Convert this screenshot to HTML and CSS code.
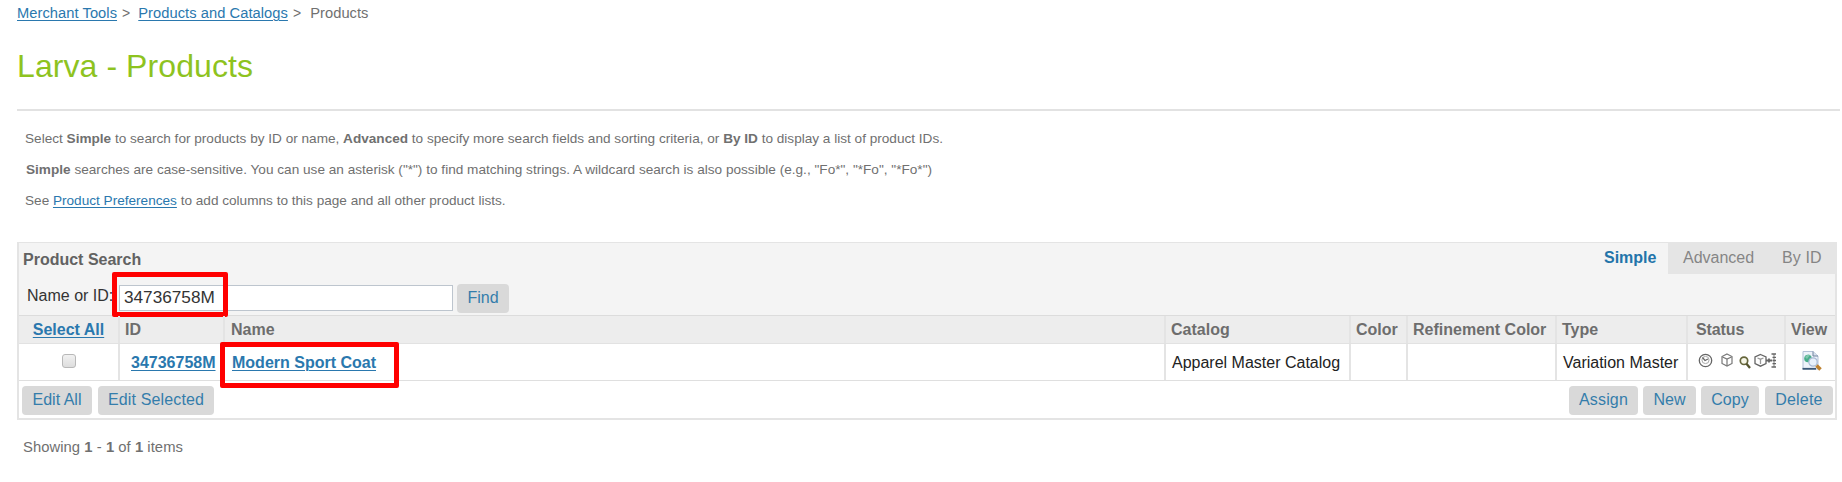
FILE: index.html
```
<!DOCTYPE html>
<html lang="en">
<head>
<meta charset="utf-8">
<title>Larva - Products</title>
<link rel="stylesheet" href="styles.css">
</head>
<body>
<nav class="crumbs"><a href="#" class="crumb-tools">Merchant Tools</a><span class="sep">&gt;</span><a href="#">Products and Catalogs</a><span class="sep">&gt;</span><span class="current">Products</span></nav>
<h1 class="title">Larva - Products</h1>
<section class="help">
  <p>Select <b>Simple</b> to search for products by ID or name, <b>Advanced</b> to specify more search fields and sorting criteria, or <b>By ID</b> to display a list of product IDs.</p>
  <p class="second"><b>Simple</b> searches are case-sensitive. You can use an asterisk ("*") to find matching strings. A wildcard search is also possible (e.g., "Fo*", "*Fo", "*Fo*")</p>
  <p>See <a href="#">Product Preferences</a> to add columns to this page and all other product lists.</p>
</section>
<main class="panel">
  <div class="search">
    <div class="search-top">
      <span class="search-title">Product Search</span>
      <div class="tabs"><span class="tab active">Simple</span><span class="tab">Advanced</span><span class="tab last">By ID</span></div>
    </div>
    <div class="search-row">
      <label class="label">Name or ID:</label>
      <div class="field">34736758M<span class="mark mark-id"></span></div>
      <button class="btn find">Find</button>
    </div>
  </div>
  <div class="grid head">
    <div class="center"><a href="#" class="select-all">Select All</a></div>
    <div>ID</div><div class="name-head">Name</div><div>Catalog</div><div>Color</div><div class="refine">Refinement Color</div><div>Type</div><div class="status-head">Status</div><div>View</div>
  </div>
  <div class="grid row">
    <div class="center"><span class="check"></span></div>
    <div class="id"><a href="#">34736758M</a></div>
    <div class="name"><a href="#">Modern Sport Coat</a><span class="mark mark-name"></span></div>
    <div>Apparel Master Catalog</div><div></div><div></div><div>Variation Master</div>
    <div class="icons">
      <svg class="clock" viewBox="0 0 15 15"><g fill="none" stroke="#666"><circle cx="7.5" cy="7.5" r="6.2" stroke-width="1.3"/><circle cx="7.5" cy="7" r="3.6" stroke="#aaa"/><path d="M4.5 4.5 7 7.5 10 6" stroke-width="1.2"/></g></svg>
      <svg class="cube" viewBox="0 0 12 14"><g fill="none" stroke="#777" stroke-width="1.2"><path d="M6 1 11 3.5V10.5L6 13 1 10.5V3.5Z"/><path d="M1.5 4 6 6 10.5 4M6 6V12.5"/></g></svg>
      <svg class="lens" viewBox="0 0 12 13"><circle cx="5" cy="4.8" r="3.7" fill="#f7f7e8" stroke="#66663c" stroke-width="1.7"/><path d="M7.5 7.8 11 12" stroke="#55552e" stroke-width="2.3"/></svg>
      <svg class="variants" viewBox="0 0 23 15"><g fill="none" stroke="#666" stroke-width="1.3"><path d="M6.5 1.5 12 4V10.5L6.5 13.2 1 10.5V4Z"/><path d="M3.5 5 6.5 6.2 9.5 5M6.5 6.2V11" stroke="#999"/><path d="M12 7.5H18M15 5.5V9.5" stroke-width="1.8"/><path d="M20 1V14" stroke="#999"/><path d="M17.5 1H22M18.5 4.3H22M18.5 7.5H22M18.5 10.7H22M17.5 14H22"/></g></svg>
    </div>
    <div class="view"><svg viewBox="0 0 22 22"><path d="M2 1.5H12L17 6V19H2Z" fill="#eef3fa" stroke="#b3c1d7"/><path d="M1.5 18.8H15" stroke="#3c5878" stroke-width="1.8"/><path d="M12 1.5V6H17" fill="#d8e0ec" stroke="#71849f"/><circle cx="7" cy="8.5" r="3.8" fill="#48ae8a"/><path d="M4 7Q7 3.5 9 5L6 9Z" fill="#7fc7ae"/><circle cx="12" cy="12" r="4.2" fill="#e8f1fb" stroke="#a9bbd6" stroke-width="1.2"/><path d="M15.5 15.5 19.5 19.5" stroke="#bd812f" stroke-width="3.6"/></svg></div>
  </div>
  <div class="foot">
    <button class="btn edit-all">Edit All</button><button class="btn edit-sel">Edit Selected</button><span class="gap"></span>
    <button class="btn assign">Assign</button><button class="btn new">New</button><button class="btn copy">Copy</button><button class="btn delete">Delete</button>
  </div>
</main>
<footer class="count">Showing <b>1</b> - <b>1</b> of <b>1</b> items</footer>
</body>
</html>
```
FILE: styles.css
```
* { box-sizing: border-box; }
body { margin: 0; padding: 3px 2px 0 17px; width: 1842px; height: 482px; overflow: hidden; background: #fff; color: #707070; font-family: "Liberation Sans", Arial, sans-serif; font-size: 16px; }
a { color: #2a78ae; text-decoration: underline; text-underline-offset: 2px; text-decoration-thickness: 1px; }
.crumbs { height: 20px; line-height: 20px; font-size: 14.7px; letter-spacing: 0.05px; white-space: nowrap; }
.sep { margin: 0 8px 0 5px; font-size: 14px; }
.current { margin-left: 1px; }
.title { margin: 23px 0 0; height: 65px; line-height: 40px; font-size: 32px; font-weight: 400; letter-spacing: 0.08px; color: #8ec31f; border-bottom: 2px solid #e2e2e2; }
.help { padding: 12px 0 0 8px; height: 131px; font-size: 13.6px; }
.help p { margin: 0; height: 31px; line-height: 31px; white-space: nowrap; }
.help .second { padding-left: 1px; line-height: 31px; letter-spacing: 0.01px; }
.panel { width: 1820px; height: 178px; border: 2px solid #e4e4e4; }
.search { height: 73px; background: #f4f4f4; border-bottom: 1px solid #dcdcdc; }
.search-top { display: flex; height: 31px; margin-top: -1px; justify-content: space-between; }
.search-title { padding-left: 4px; line-height: 34px; font-weight: 700; color: #626262; }
.tabs { display: flex; height: 32px; margin: -1px -2px 0 0; line-height: 32px; color: #858585; }
.tab { height: 32px; background: #e5e5e5; padding-left: 15px; }
.tab:nth-child(2) { width: 99px; }
.tab.last { width: 70px; letter-spacing: 0.1px; }
.tab.active { background: none; width: 64px; padding: 0; color: #2374aa; font-weight: 700; }
.search-row { display: flex; margin-top: 10px; height: 28px; }
.label { width: 100px; padding-left: 8px; line-height: 24px; color: #333; white-space: nowrap; }
.field { position: relative; width: 334px; height: 26px; margin-top: 1px; border: 1px solid #bdc5ce; background: #fff; padding-left: 4px; line-height: 22px; font-size: 17.2px; color: #333; }
.mark { position: absolute; border: 5px solid #ff0000; border-radius: 2px; }
.mark-id { left: -8px; top: -14px; width: 116px; height: 45px; }
.mark-name { left: -5px; top: -2px; width: 179px; height: 46px; z-index: 1; }
.btn { border: 0; border-radius: 4px; height: 29px; padding: 0 0 1px; background: #d9d9d9; color: #347dab; font: 16px/28px "Liberation Sans", Arial, sans-serif; white-space: nowrap; }
.find { width: 52px; margin-left: 4px; }
.grid { display: grid; grid-template-rows: 100%; grid-template-columns: 101px 105px 941px 185px 57px 149px 131px 98px 49px; }
.grid > div { position: relative; border-right: 2px solid #e4e4e4; padding-left: 5px; white-space: nowrap; }
.grid > div:last-child { border-right: 0; }
.grid > .center { padding: 0; text-align: center; }
.head { height: 28px; line-height: 28px; background: #ededed; border-bottom: 1px solid #e2e2e2; color: #6d6d6d; font-weight: 700; }
.head .name-head { padding-left: 6px; }
.head .status-head { padding-left: 8px; letter-spacing: -0.1px; }
.row { height: 37px; line-height: 38px; border-bottom: 1px solid #dfdfdf; color: #222; }
.grid .id { padding-left: 11px; font-weight: 700; }
.grid .name { padding-left: 7px; font-weight: 700; }
.row > div:nth-child(4), .row > div:nth-child(7) { padding-left: 6px; }
.check { display: block; width: 14px; height: 14px; margin: 10px auto 0; border: 1px solid #b8b8b8; border-radius: 3px; background: linear-gradient(#f1f1f1, #dddddd); }
.grid .icons { display: flex; align-items: flex-start; padding: 9px 0 0 10px; }
.icons svg, .view svg { display: block; flex: none; }
.clock { width: 15px; height: 15px; }
.cube { width: 12px; height: 14px; margin-left: 8px; }
.lens { width: 12px; height: 13px; margin: 3px 0 0 6px; }
.variants { width: 23px; height: 15px; margin-left: 3px; }
.grid .view { padding: 6px 0 0 15px; }
.view svg { width: 22px; height: 22px; }
.foot { display: flex; height: 36px; padding: 5px 2px 0 3px; }
.gap { flex: 1; }
.edit-all { width: 70px; margin-right: 6px; }
.edit-sel { width: 116px; letter-spacing: 0.15px; }
.assign { width: 69px; margin-right: 5px; letter-spacing: 0.15px; }
.new { width: 53px; margin-right: 5px; }
.copy { width: 58px; margin-right: 6px; }
.delete { width: 68px; letter-spacing: 0.2px; }
.count { margin-top: 16px; padding-left: 6px; height: 22px; line-height: 22px; font-size: 14.8px; letter-spacing: 0.05px; }
```
